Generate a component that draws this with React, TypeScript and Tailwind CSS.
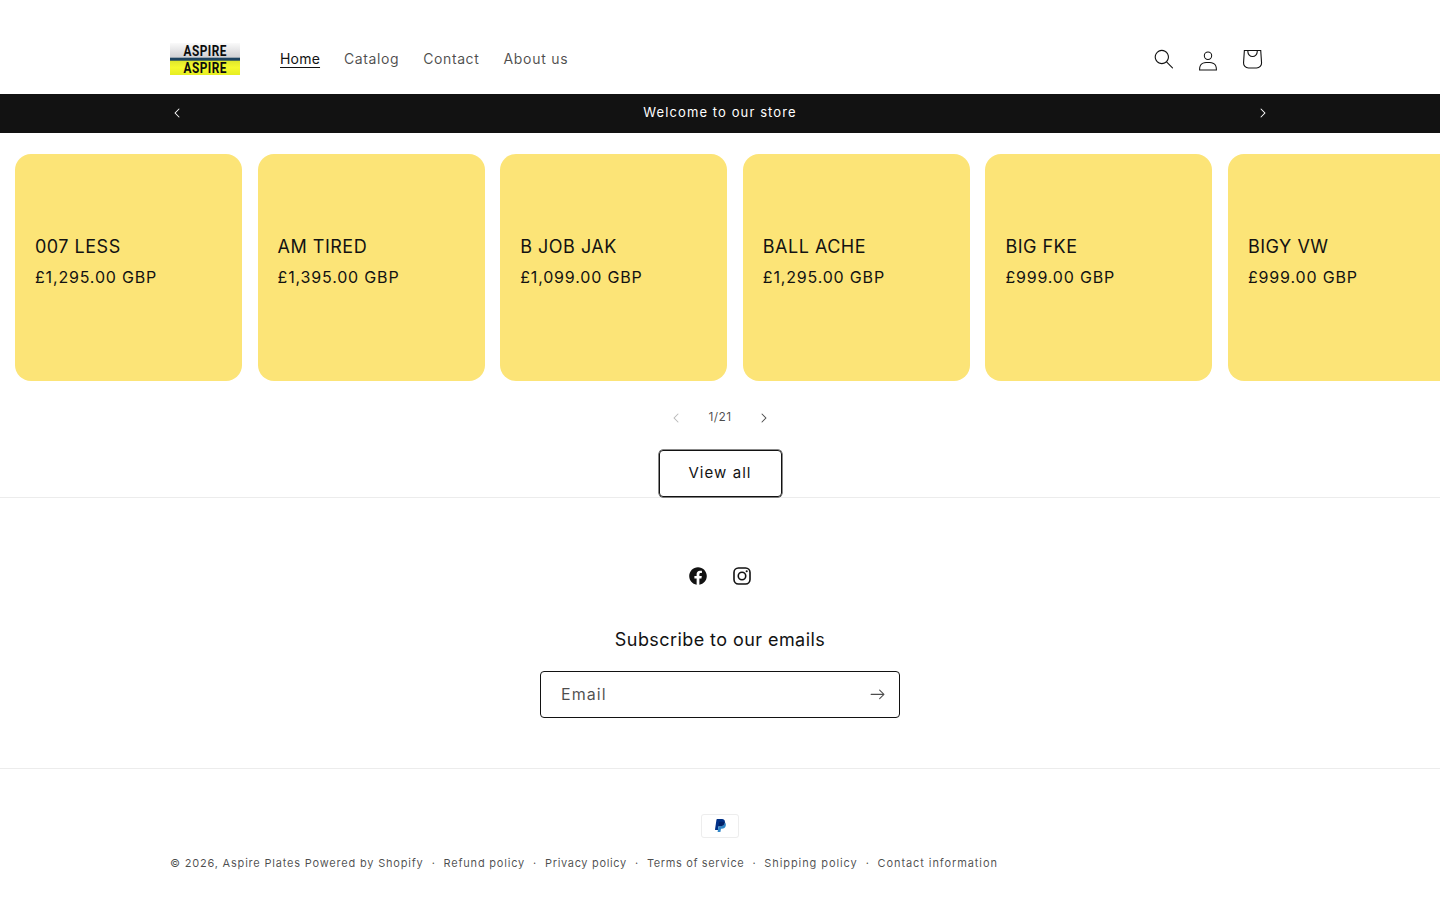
import type { ReactNode } from "react";

const navLinks = [
  { label: "Home", className: "tracking-[0.2px] text-[#121212] underline underline-offset-[3px]" },
  { label: "Catalog", className: "text-[#121212]/75" },
  { label: "Contact", className: "text-[#121212]/75" },
  { label: "About us", className: "tracking-[0.73px] text-[#121212]/75" },
];

const products = [
  { title: "007 LESS", price: "£1,295.00 GBP" },
  { title: "AM TIRED", price: "£1,395.00 GBP" },
  { title: "B JOB JAK", price: "£1,099.00 GBP" },
  { title: "BALL ACHE", price: "£1,295.00 GBP" },
  { title: "BIG FKE", price: "£999.00 GBP" },
  { title: "BIGY VW", price: "£999.00 GBP" },
];

const policies = [
  { label: "Refund policy", className: "tracking-[0.79px]" },
  { label: "Privacy policy", className: "tracking-[0.67px]" },
  { label: "Terms of service", className: "tracking-[0.63px]" },
  { label: "Shipping policy", className: "tracking-[0.91px]" },
  { label: "Contact information", className: "tracking-[0.91px]" },
];

function Caret({ className }: { className?: string }) {
  return (
    <svg viewBox="0 0 10 6" className={className} fill="currentColor">
      <path
        fillRule="evenodd"
        clipRule="evenodd"
        d="M9.354.646a.5.5 0 00-.708 0L5 4.293 1.354.646a.5.5 0 00-.708.708l4 4a.5.5 0 00.708 0l4-4a.5.5 0 000-.708z"
      />
    </svg>
  );
}

function Logo() {
  return (
    <svg viewBox="0 0 70 32" className="h-8 w-[70px] overflow-visible">
      <defs>
        <linearGradient id="front" x1="0" y1="0" x2="0" y2="1">
          <stop offset="0" stopColor="#fafafa" />
          <stop offset="1" stopColor="#cfcfd2" />
        </linearGradient>
        <linearGradient id="rear" x1="0" y1="0" x2="0" y2="1">
          <stop offset="0" stopColor="#dce52c" />
          <stop offset="0.5" stopColor="#f5f92e" />
          <stop offset="1" stopColor="#e6ee22" />
        </linearGradient>
      </defs>
      <rect width="70" height="15" fill="url(#front)" />
      <rect y="17" width="70" height="15" fill="url(#rear)" />
      <rect y="14.7" width="70" height="3" fill="#1d4360" />
      <g fontFamily="Roboto, sans-serif" fontWeight="700" fontSize="14.5" fill="#0c0c0c">
        <text x="13.5" y="13" textLength="43.5" lengthAdjust="spacingAndGlyphs">
          ASPIRE
        </text>
        <text x="13.5" y="30" textLength="43.5" lengthAdjust="spacingAndGlyphs">
          ASPIRE
        </text>
      </g>
    </svg>
  );
}

function IconButton({ label, children }: { label: string; children: ReactNode }) {
  return (
    <button aria-label={label} className="flex h-11 w-11 items-center justify-center">
      {children}
    </button>
  );
}

function Header() {
  return (
    <header className="mx-auto flex h-[94px] w-[1100px] items-center pt-6">
      <Logo />
      <nav className="ml-7 flex">
        {navLinks.map((link) => (
          <a key={link.label} href="#" className="px-3 text-sm leading-[18px]">
            <span className={link.className}>{link.label}</span>
          </a>
        ))}
      </nav>
      <div className="-mr-1 ml-auto flex">
        <IconButton label="Search">
          <svg viewBox="0 0 18 19" className="h-5 w-5" fill="currentColor">
            <path
              fillRule="evenodd"
              clipRule="evenodd"
              d="M11.03 11.68A5.784 5.784 0 112.85 3.5a5.784 5.784 0 018.18 8.18zm.26 1.12a6.78 6.78 0 11.72-.7l5.4 5.4a.5.5 0 11-.71.7l-5.41-5.4z"
            />
          </svg>
        </IconButton>
        <IconButton label="Log in">
          <svg viewBox="0 0 18 19" className="mt-[3px] h-5 w-5" fill="currentColor">
            <path
              fillRule="evenodd"
              clipRule="evenodd"
              d="M6 4.5a3 3 0 116 0 3 3 0 01-6 0zm3-4a4 4 0 100 8 4 4 0 000-8zm5.58 12.15c1.12.82 1.83 2.24 1.91 4.85H1.51c.08-2.6.79-4.03 1.9-4.85C4.66 11.75 6.5 11.5 9 11.5s4.35.26 5.58 1.15zM9 10.5c-2.5 0-4.65.24-6.17 1.35C1.27 12.98.5 14.93.5 18v.5h17V18c0-3.07-.77-5.02-2.33-6.15-1.52-1.1-3.67-1.35-6.17-1.35z"
            />
          </svg>
        </IconButton>
        <IconButton label="Cart">
          <svg viewBox="0 0 40 40" className="h-11 w-11" fill="currentColor">
            <path
              fillRule="evenodd"
              d="M15.75 11.8h-3.16l-.77 11.6a5 5 0 0 0 4.99 5.34h7.38a5 5 0 0 0 4.99-5.33L28.4 11.8zm0 1h-2.22l-.71 10.67a4 4 0 0 0 3.99 4.27h7.38a4 4 0 0 0 4-4.27l-.72-10.67h-2.22v.63a4.75 4.75 0 1 1-9.5 0zm8.5 0h-7.5v.63a3.75 3.75 0 1 0 7.5 0z"
            />
          </svg>
        </IconButton>
      </div>
    </header>
  );
}

export default function App() {
  return (
    <div className="h-[900px] w-full overflow-hidden bg-white font-['Inter',sans-serif] tracking-[0.6px] text-[#121212]">
      <Header />

      {/* Announcement bar */}
      <section className="h-[39px] bg-[#121212] text-white">
        <div className="mx-auto flex h-[38px] w-[1100px] items-center justify-between">
          <Caret className="ml-0.5 h-1.5 w-2.5 rotate-90" />
          <p className="text-[13px] tracking-[1.1px]">Welcome to our store</p>
          <Caret className="mr-0.5 h-1.5 w-2.5 -rotate-90" />
        </div>
      </section>

      {/* Featured collection */}
      <section>
        <ul className="flex gap-[15.5px] overflow-hidden pt-[21px] pl-[15px]">
          {products.map((product) => (
            <li
              key={product.title}
              className="flex h-[227px] w-[227.1px] shrink-0 flex-col justify-center rounded-[16px] bg-[#fce477] px-5 pb-3"
            >
              <h3 className="text-lg leading-[23px] tracking-[0.5px]">{product.title}</h3>
              <p className="mt-[7px] text-base leading-6 tracking-[0.83px]">{product.price}</p>
            </li>
          ))}
        </ul>
        <div className="mt-[15px] flex h-11 items-center justify-center">
          <button className="flex h-11 w-11 items-center justify-center text-[#121212]/30">
            <Caret className="h-1.5 w-2.5 rotate-90" />
          </button>
          <span className="w-11 pb-0.5 text-center text-xs tracking-[0.45px] text-[#121212]/75">1/21</span>
          <button className="flex h-11 w-11 items-center justify-center text-[#121212]/75">
            <Caret className="h-1.5 w-2.5 -rotate-90" />
          </button>
        </div>
        <div className="flex justify-center pt-[10px]">
          <button className="h-[47px] w-[123px] rounded-[4px] border border-[#121212] pb-px text-[15px] tracking-[1.05px] shadow-[0_0_0_0.5px_#121212]">
            View all
          </button>
        </div>
      </section>

      {/* Footer */}
      <footer className="border-t border-[#121212]/8">
        <div className="flex h-[270px] flex-col items-center pt-14">
          <div className="flex">
            <IconButton label="Facebook">
              <svg viewBox="0 0 20 20" className="h-[22px] w-[22px]" fill="currentColor">
                <path d="M18 10.049C18 5.603 14.419 2 10 2c-4.419 0-8 3.603-8 8.049C2 14.067 4.925 17.396 8.75 18v-5.624H6.719v-2.328h2.03V8.275c0-2.017 1.195-3.132 3.023-3.132.874 0 1.79.158 1.79.158v1.98h-1.009c-.994 0-1.303.621-1.303 1.258v1.51h2.219l-.355 2.326H11.25V18c3.825-.604 6.75-3.933 6.75-7.951Z" />
              </svg>
            </IconButton>
            <IconButton label="Instagram">
              <svg viewBox="0 0 20 20" className="h-[22px] w-[22px]" fill="none" stroke="currentColor" strokeWidth="1.45">
                <rect x="2.72" y="2.72" width="14.56" height="14.56" rx="4" />
                <circle cx="10" cy="10" r="3.4" />
                <circle cx="14.27" cy="5.73" r="0.96" fill="currentColor" stroke="none" />
              </svg>
            </IconButton>
          </div>
          <h2 className="mt-[30px] text-lg leading-[23px] tracking-[0.43px]">Subscribe to our emails</h2>
          <form className="mt-5 flex h-[47px] w-[360px] items-center justify-between rounded-[4px] border border-[#121212] pr-3.5 pl-5">
            <label className="pb-px text-base tracking-[1.05px] text-[#121212]/75">Email</label>
            <svg viewBox="0 0 14 10" className="w-[15px] text-[#121212]/75" fill="currentColor">
              <path
                fillRule="evenodd"
                clipRule="evenodd"
                d="M8.537.808a.5.5 0 01.817-.162l4 4a.5.5 0 010 .708l-4 4a.5.5 0 11-.708-.708L11.793 5.5H1a.5.5 0 010-1h10.793L8.646 1.354a.5.5 0 01-.109-.546z"
              />
            </svg>
          </form>
        </div>

        <div className="border-t border-[#121212]/8 pt-[45px]">
          <svg viewBox="0 0 38 24" className="mx-auto h-6 w-[38px]">
            <path opacity=".07" d="M35 0H3C1.3 0 0 1.3 0 3v18c0 1.7 1.4 3 3 3h32c1.7 0 3-1.3 3-3V3c0-1.7-1.4-3-3-3z" />
            <path fill="#fff" d="M35 1c1.1 0 2 .9 2 2v18c0 1.1-.9 2-2 2H3c-1.1 0-2-.9-2-2V3c0-1.1.9-2 2-2h32" />
            <path fill="#003087" d="M23.9 8.3c.2-1 0-1.7-.6-2.3-.6-.7-1.7-1-3.1-1h-4.1c-.3 0-.5.2-.6.5L14 15.6c0 .2.1.4.3.4H17l.4-3.4 1.8-2.2 4.7-2.1z" />
            <path fill="#3086C8" d="M23.9 8.3l-.2.2c-.5 2.8-2.2 3.8-4.6 3.8H18c-.3 0-.5.2-.6.5l-.6 3.9-.2 1c0 .2.1.4.3.4H19c.3 0 .5-.2.5-.4v-.1l.4-2.4v-.1c0-.2.3-.4.5-.4h.3c2.1 0 3.7-.8 4.1-3.2.2-1 .1-1.8-.4-2.4-.1-.5-.3-.7-.5-.8z" />
            <path fill="#012169" d="M23.3 8.1c-.1-.1-.2-.1-.3-.1-.1 0-.2 0-.3-.1-.3-.1-.7-.1-1.1-.1h-3c-.1 0-.2 0-.2.1-.2.1-.3.2-.3.4l-.7 4.4v.1c0-.3.3-.5.6-.5h1.3c2.5 0 4.1-1 4.6-3.8v-.2c-.1-.1-.3-.2-.5-.2h-.1z" />
          </svg>
          <div className="mx-auto mt-[15px] flex w-[1100px] text-[11px] leading-5 text-[#121212]/75">
            <span className="tracking-[0.8px]">© 2026, Aspire Plates Powered by Shopify</span>
            {policies.map((policy) => (
              <span key={policy.label} className="flex">
                <span className="w-5 text-center">·</span>
                <a href="#" className={policy.className}>
                  {policy.label}
                </a>
              </span>
            ))}
          </div>
        </div>
      </footer>
    </div>
  );
}
